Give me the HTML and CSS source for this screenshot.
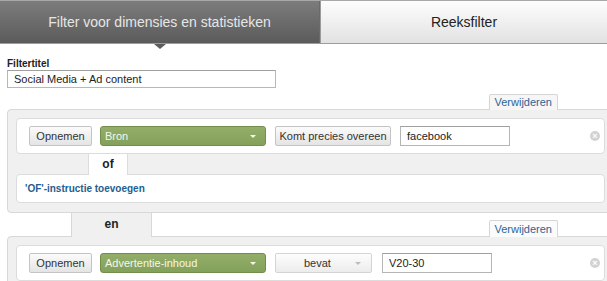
FILE: index.html
```html
<!DOCTYPE html>
<html>
<head>
<meta charset="utf-8">
<link rel="stylesheet" href="styles.css">
</head>
<body>
<div class="tabs">
  <div class="tab tab-active">Filter voor dimensies en statistieken</div>
  <div class="tab">Reeksfilter</div>
</div>
<div class="page">
  <div class="label">Filtertitel</div>
  <div class="title-input">Social Media + Ad content</div>

  <div class="group-head first">
    <span class="remove">Verwijderen</span>
  </div>
  <div class="group">
    <div class="cond">
      <span class="btn w-opn">Opnemen</span>
      <span class="dim w-dim">Bron<i class="caret"></i></span>
      <span class="btn w-komt">Komt precies overeen</span>
      <span class="inp w-inp">facebook</span>
      <span class="clear">×</span>
    </div>
    <div class="or-row"><span class="or-tab">of</span></div>
    <div class="add">'OF'-instructie toevoegen</div>
  </div>

  <div class="group-head between">
    <span class="and-tab">en</span>
    <span class="remove">Verwijderen</span>
  </div>
  <div class="group">
    <div class="cond">
      <span class="btn w-opn">Opnemen</span>
      <span class="dim w-dim">Advertentie-inhoud<i class="caret"></i></span>
      <span class="btn sel w-bevat">bevat<i class="caret grey"></i></span>
      <span class="inp w-inp2">V20-30</span>
      <span class="clear">×</span>
    </div>
    <div class="or-row"><span class="or-tab"></span></div>
  </div>
</div>
</body>
</html>
```
FILE: styles.css
```css
html, body {
  margin: 0;
  padding: 0;
}
body {
  width: 607px;
  height: 281px;
  overflow: hidden;
  background: #fff;
  font-family: "Liberation Sans", Arial, sans-serif;
  color: #222;
}
.tabs {
  display: flex;
  height: 42px;
  border-top: 1px solid #a8a8a8;
  border-bottom: 1px solid #9c9c9c;
}
.tab {
  flex: 1;
  display: flex;
  align-items: center;
  justify-content: center;
  font-size: 14px;
  color: #222;
  background: linear-gradient(#fdfdfd, #e2e2e2);
  border-left: 1px solid #9a9a9a;
}
.tab-active {
  flex: 0 0 319px;
  position: relative;
  border-left: 0;
  color: #e6e6e6;
  background: linear-gradient(#7c7c7c, #5b5b5b);
  border-right: 1px solid #6a6a6a;
}
.tab-active::after {
  content: "";
  position: absolute;
  left: 154px;
  top: 100%;
  margin-top: 1px;
  border-left: 6px solid transparent;
  border-right: 6px solid transparent;
  border-top: 5px solid #5c5c5c;
}
.page {
  padding-left: 7px;
}
.label {
  margin-top: 14px;
  font-size: 10px;
  line-height: 12px;
  font-weight: bold;
  color: #222;
}
.title-input {
  width: 269px;
  height: 18px;
  box-sizing: border-box;
  border: 1px solid #b8b8b8;
  border-top-color: #a0a0a0;
  font-size: 11px;
  line-height: 16px;
  padding: 0 6px;
}
.group-head {
  display: flex;
  align-items: flex-end;
  width: 607px;
}
.group-head.first {
  margin-top: 6px;
}
.remove {
  margin-left: auto;
  margin-right: 56px;
  margin-bottom: -1px;
  position: relative;
  z-index: 1;
  height: 15px;
  line-height: 15px;
  padding: 0 5px;
  font-size: 11px;
  color: #2d6496;
  background: #f6f6f6;
  border: 1px solid #d6d6d6;
  border-bottom: 0;
  border-radius: 2px 2px 0 0;
}
.between .remove {
  background: #fbfbfb;
  height: 16px;
  line-height: 16px;
}
.and-tab {
  margin-left: 64px;
  margin-bottom: -1px;
  position: relative;
  z-index: 1;
  width: 79px;
  height: 24px;
  line-height: 23px;
  text-align: center;
  font-size: 12px;
  font-weight: bold;
  color: #222;
  background: #f0f0f0;
  border-left: 1px solid #d8d8d8;
  border-right: 1px solid #d8d8d8;
}
.group {
  width: 607px;
  box-sizing: border-box;
  background: #f0f0f0;
  border: 1px solid #d8d8d8;
  border-radius: 4px;
  padding: 8px 8px 9px 8px;
}
.cond {
  display: flex;
  align-items: center;
  background: #fff;
  border: 1px solid #dcdcdc;
  border-radius: 4px;
  padding: 7px 4px 7px 12px;
  font-size: 11px;
}
.btn, .dim, .inp {
  box-sizing: border-box;
  height: 20px;
  line-height: 18px;
  font-size: 11px;
  position: relative;
}
.btn {
  text-align: center;
  color: #333;
  border: 1px solid #c4c4c4;
  border-radius: 2px;
  background: linear-gradient(#fbfbfb, #e4e4e4);
}
.btn.sel {
  text-align: left;
  padding-left: 28px;
  border-color: #d4d4d4;
  background: linear-gradient(#fdfdfd, #ececec);
}
.dim {
  color: #f3f7ec;
  padding-left: 4px;
  border: 1px solid #728d4c;
  border-radius: 3px;
  background: linear-gradient(#92ae69, #84a15b);
}
.inp {
  padding-left: 6px;
  border: 1px solid #b5b5b5;
  border-top-color: #a0a0a0;
  color: #222;
  background: #fff;
}
.caret {
  position: absolute;
  right: 9px;
  top: 8px;
  border-left: 3px solid transparent;
  border-right: 3px solid transparent;
  border-top: 3px solid #f4f7ee;
}
.caret.grey {
  right: 10px;
  border-top-color: #bbb;
}
.w-opn { width: 63px; }
.w-dim { width: 166px; margin-left: 8px; }
.w-komt { width: 116px; margin-left: 9px; }
.w-inp { width: 110px; margin-left: 9px; }
.w-bevat { width: 97px; margin-left: 9px; }
.w-inp2 { width: 110px; margin-left: 10px; }
.clear {
  margin-left: auto;
  width: 10px;
  height: 10px;
  border-radius: 50%;
  background: #d2d2d2;
  color: #fff;
  font-size: 9px;
  line-height: 10px;
  text-align: center;
  font-weight: bold;
}
.or-row {
  display: flex;
  padding-left: 72px;
}
.or-tab {
  width: 38px;
  height: 21px;
  line-height: 21px;
  margin-bottom: -1px;
  position: relative;
  z-index: 1;
  text-align: center;
  font-size: 12px;
  font-weight: bold;
  background: #fff;
  border-left: 1px solid #dcdcdc;
  border-right: 1px solid #dcdcdc;
}
.add {
  background: #fff;
  border: 1px solid #dcdcdc;
  border-radius: 4px;
  padding: 7px 8px;
  line-height: 13px;
  font-size: 10px;
  font-weight: bold;
  color: #1f5e8e;
}
```
